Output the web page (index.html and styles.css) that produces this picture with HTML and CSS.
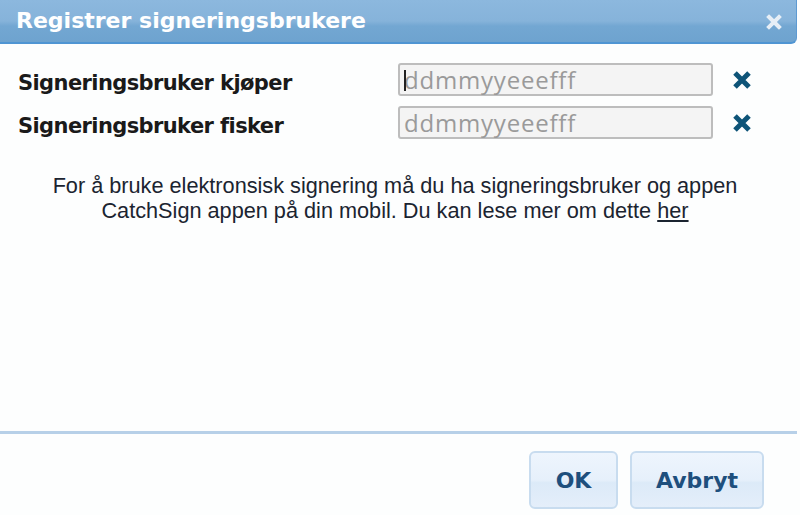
FILE: index.html
```html
<!DOCTYPE html>
<html lang="no">
<head>
<meta charset="utf-8">
<link rel="stylesheet" href="styles.css">
</head>
<body>
<div class="dialog">
  <div class="titlebar">
    <span class="title">Registrer signeringsbrukere</span>
    <span class="close" aria-label="Lukk">
      <svg width="16" height="16" viewBox="0 0 16 16"><path d="M3 3 L13 13 M13 3 L3 13" stroke="#e6eef6" stroke-width="4" stroke-linecap="square"/></svg>
    </span>
  </div>
  <div class="content">
    <div class="rows">
      <div class="row">
        <label class="label">Signeringsbruker kjøper</label>
        <div class="field"><span class="caret"></span><span class="ph">ddmmyyeeefff</span></div>
        <span class="clear"><svg width="20" height="18" viewBox="0 0 20 18"><path d="M3 2 L17 16 M17 2 L3 16" stroke="#0e5478" stroke-width="5"/></svg></span>
      </div>
      <div class="row">
        <label class="label">Signeringsbruker fisker</label>
        <div class="field"><span class="ph">ddmmyyeeefff</span></div>
        <span class="clear"><svg width="20" height="18" viewBox="0 0 20 18"><path d="M3 2 L17 16 M17 2 L3 16" stroke="#0e5478" stroke-width="5"/></svg></span>
      </div>
    </div>
    <p class="info">For å bruke elektronsisk signering må du ha signeringsbruker og appen<br>CatchSign appen på din mobil. Du kan lese mer om dette <a href="#" class="link">her</a></p>
  </div>
  <div class="footer">
    <button class="btn btn-ok">OK</button>
    <button class="btn btn-cancel">Avbryt</button>
  </div>
</div>
</body>
</html>
```

FILE: styles.css
```css
html, body {
  margin: 0;
  padding: 0;
  background: #fdfefe;
}
.dialog {
  width: 800px;
  height: 515px;
  display: flex;
  flex-direction: column;
}
.titlebar {
  width: 797px;
  height: 44px;
  box-sizing: border-box;
  background: linear-gradient(#8cb8de 0%, #86b3da 50%, #73a7d2 62%, #6ea3cf 100%);
  border-bottom: 2px solid #4f95d3;
  border-right: 1px solid #5d9ad2;
  border-bottom-right-radius: 6px;
  display: flex;
  align-items: center;
  justify-content: space-between;
  padding: 0 14px 2px 16px;
}
.title {
  font-family: "DejaVu Sans", Verdana, sans-serif;
  font-weight: bold;
  font-size: 22px;
  color: #ffffff;
}
.close {
  display: flex;
  margin-top: 4px;
}
.content {
  flex: 1;
  display: flex;
  flex-direction: column;
}
.rows {
  display: flex;
  flex-direction: column;
  gap: 10px;
  padding: 19px 0 0 18px;
}
.row {
  display: flex;
  align-items: center;
}
.label {
  width: 380px;
  padding-top: 7px;
  font-family: "DejaVu Sans", Verdana, sans-serif;
  font-weight: bold;
  font-size: 21px;
  color: #1a1a1a;
  letter-spacing: -0.6px;
}
.field {
  width: 315px;
  height: 33px;
  box-sizing: border-box;
  border: 2px solid #bdbdbd;
  border-radius: 3px;
  background: #f4f4f4;
  display: flex;
  align-items: center;
  padding-left: 4px;
  position: relative;
}
.caret {
  position: absolute;
  left: 4px;
  top: 5px;
  width: 2px;
  height: 21px;
  background: #222;
}
.ph {
  font-family: "Open Sans", sans-serif;
  font-size: 24px;
  color: #9a9a9a;
  letter-spacing: 0.8px;
  line-height: 29px;
}
.clear {
  display: flex;
  margin-left: 19px;
}
.info {
  margin: 34px 0 0 0;
  width: 790px;
  text-align: center;
  font-family: "Liberation Sans", Arial, sans-serif;
  font-size: 21.7px;
  line-height: 25px;
  color: #1b2430;
}
.link {
  color: #1b2430;
  text-decoration: underline;
}
.footer {
  height: 84px;
  box-sizing: border-box;
  width: 797px;
  border-top: 3px solid #b7d0e8;
  display: flex;
  justify-content: flex-end;
  align-items: flex-start;
  gap: 12px;
  padding: 17px 33px 0 0;
}
.btn {
  height: 58px;
  border: 2px solid #c8dcef;
  border-radius: 6px;
  background: linear-gradient(#eef5fd 0%, #e6f0fb 50%, #dceaf8 55%, #e4eefa 100%);
  font-family: "DejaVu Sans", Verdana, sans-serif;
  font-weight: bold;
  font-size: 22px;
  color: #1e4f7d;
  padding: 0;
}
.btn-ok { width: 89px; }
.btn-cancel { width: 134px; }
```
